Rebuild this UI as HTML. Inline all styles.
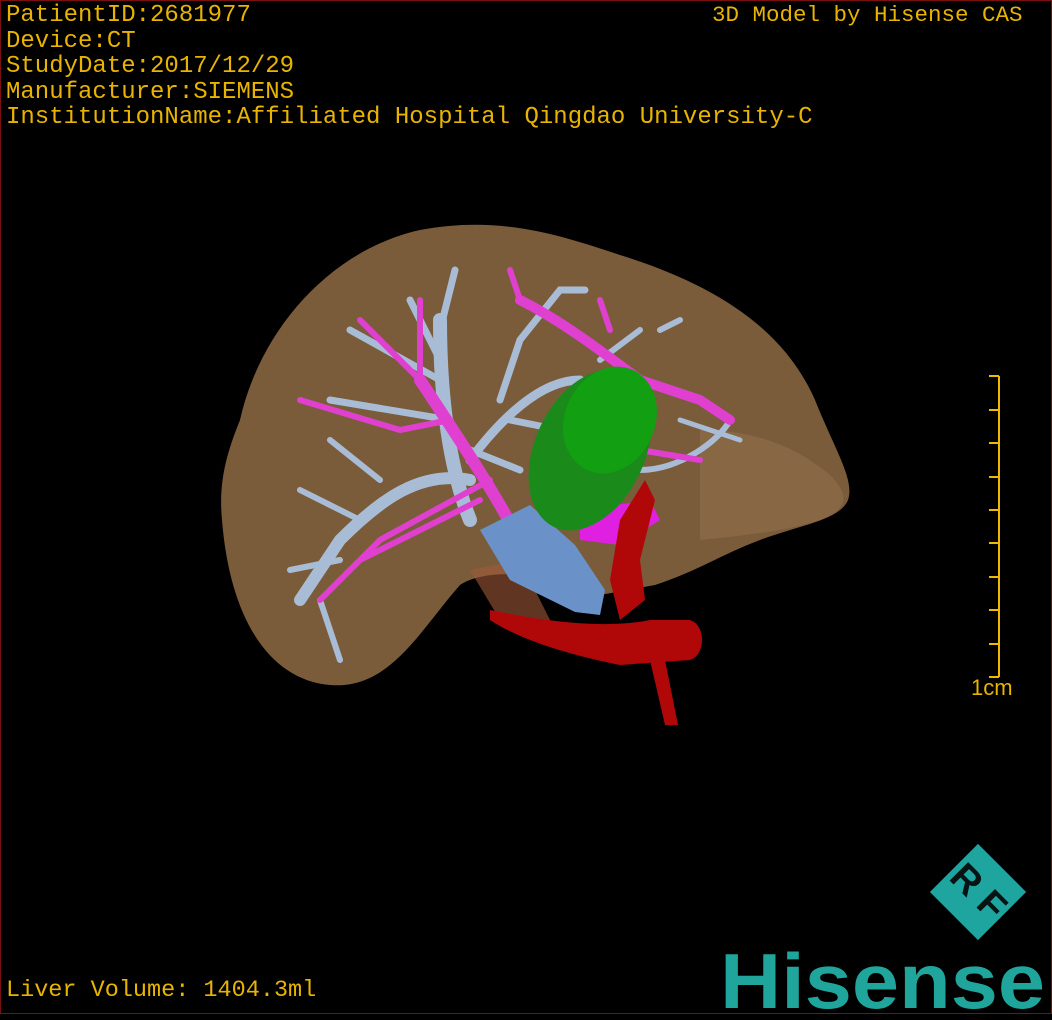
<!DOCTYPE html>
<html><head><meta charset="utf-8"><style>
html,body{margin:0;padding:0;background:#000;width:1052px;height:1020px;overflow:hidden}
.t{position:absolute;font-family:"Liberation Mono",monospace;color:#e8b400;font-size:24px;white-space:pre;line-height:25.5px}
</style></head><body>
<div style="position:absolute;left:0;top:0;width:1050px;height:1012px;border:1px solid #7a1010"></div>
<svg width="1052" height="1020" style="position:absolute;left:0;top:0">
<path d="M240,420 C260,330 330,250 420,230 C500,215 560,235 620,255 C700,280 780,320 815,400 C835,450 855,480 848,500 C840,520 800,525 760,540 C720,555 700,570 655,585 L600,595 C560,575 490,565 460,585 C420,630 390,690 330,685 C270,680 230,620 222,520 C218,480 228,450 240,420 Z" fill="#7b5c3a"/>
<path d="M700,430 C760,430 800,450 830,475 C850,495 848,510 820,520 C790,530 750,535 700,540 Z" fill="#8f6c48" opacity="0.7"/>
<path d="M470,570 L520,560 L560,640 L500,620 Z" fill="#a05a3a" opacity="0.6"/>
<g stroke="#a9bcd6" stroke-linecap="round" fill="none">
<path d="M470,520 C450,470 440,400 440,320" stroke-width="14"/>
<path d="M440,330 L455,270 M440,360 L410,300 M440,380 L350,330 M450,420 L330,400" stroke-width="7"/>
<path d="M470,480 C420,470 380,500 340,540 L300,600" stroke-width="12"/>
<path d="M360,520 L300,490 M340,560 L290,570 M320,600 L340,660 M380,480 L330,440" stroke-width="6"/>
<path d="M470,460 C500,420 540,380 580,380" stroke-width="9"/>
<path d="M500,400 L520,340 L560,290 L585,290 M510,420 L560,430 M470,450 L520,470" stroke-width="7"/>
<path d="M640,470 C680,470 720,440 730,420 M660,330 L680,320 M600,360 L640,330" stroke-width="6"/>
<path d="M680,420 L740,440" stroke-width="5"/>
</g>
<g stroke="#e040d0" stroke-linecap="round" fill="none">
<path d="M530,560 C500,500 460,440 420,380" stroke-width="12"/>
<path d="M450,420 L400,430 L300,400 M420,380 L360,320 M420,380 L420,300 M490,480 L380,540 L320,600 M480,500 L360,560" stroke-width="6"/>
<path d="M520,300 C560,320 600,350 640,380 L700,400 L730,420" stroke-width="10"/>
<path d="M640,450 L700,460 M600,300 L610,330 M510,270 L520,300" stroke-width="6"/>
</g>
<path d="M580,510 L650,500 L660,520 L620,545 L580,540 Z" fill="#e020e0"/>
<path d="M480,530 L530,505 L575,545 L605,590 L600,615 L575,612 L510,580 Z" fill="#6a92c8"/>
<ellipse cx="590" cy="450" rx="55" ry="85" transform="rotate(25 590 450)" fill="#1a8a1a"/>
<ellipse cx="610" cy="420" rx="45" ry="55" transform="rotate(25 610 420)" fill="#12a012"/>
<g fill="#b00808">
<path d="M490,610 C540,620 600,630 650,620 L690,620 C700,635 700,655 690,660 L620,665 C570,655 520,640 490,620 Z"/>
<ellipse cx="688" cy="640" rx="14" ry="20"/>
<path d="M620,520 L645,480 L655,500 L640,560 L645,600 L620,620 L610,580 Z"/>
<path d="M650,660 L665,660 L678,725 L665,725 Z"/>
</g>
<g stroke="#f0b800" stroke-width="2">
<line x1="999" y1="376" x2="999" y2="677"/>
<line x1="989" y1="376" x2="999" y2="376"/><line x1="989" y1="410" x2="999" y2="410"/><line x1="989" y1="443" x2="999" y2="443"/><line x1="989" y1="477" x2="999" y2="477"/><line x1="989" y1="510" x2="999" y2="510"/><line x1="989" y1="543" x2="999" y2="543"/><line x1="989" y1="577" x2="999" y2="577"/><line x1="989" y1="610" x2="999" y2="610"/><line x1="989" y1="644" x2="999" y2="644"/><line x1="989" y1="677" x2="999" y2="677"/>
</g>
<rect x="944" y="858" width="68" height="68" fill="#1fa5a0" transform="rotate(45 978 892)"/>
<text x="978" y="904" font-family="Liberation Sans,sans-serif" font-weight="bold" font-size="38" fill="#061414" text-anchor="middle" transform="rotate(45 978 892)">R F</text>
<text x="720" y="1008" font-family="Liberation Sans,sans-serif" font-weight="bold" font-size="78" fill="#1fa59c" textLength="325" lengthAdjust="spacingAndGlyphs">Hisense</text>
</svg>
<div class="t" style="left:6px;top:3px">PatientID:2681977
Device:CT
StudyDate:2017/12/29
Manufacturer:SIEMENS
InstitutionName:Affiliated Hospital Qingdao University-C</div>
<div class="t" style="left:712px;top:3px;font-size:22.5px">3D Model by Hisense CAS</div>
<div class="t" style="left:971px;top:675px;font-size:22px;font-family:'Liberation Sans',sans-serif">1cm</div>
<div class="t" style="left:6px;top:978px;font-size:23.5px">Liver Volume: 1404.3ml</div>
</body></html>
